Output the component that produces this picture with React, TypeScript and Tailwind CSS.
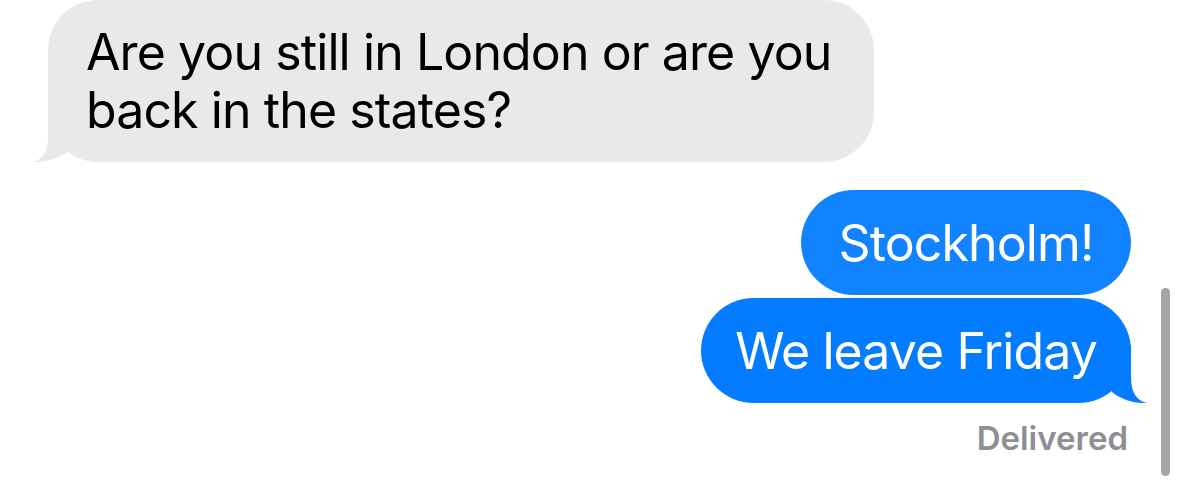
const font = { fontFamily: "Inter, 'Liberation Sans', sans-serif" };

function GrayTail() {
  return (
    <svg className="absolute left-[-16px] bottom-0" width="50" height="58" viewBox="0 0 50 58">
      <path d="M16 0 L16 34 C16 48 10 56 0 58 C10 58.5 24 56 36 48 L44 0 Z" fill="#e9e9eb" />
    </svg>
  );
}

function BlueTail() {
  return (
    <svg className="absolute right-[-16px] bottom-0" width="50" height="58" viewBox="0 0 50 58">
      <path d="M34 0 L34 32 C34 48 40 56 50 58 C40 58.5 26 56 15 47 L6 0 Z" fill="#047cff" />
    </svg>
  );
}

export default function App() {
  return (
    <div className="relative h-[489px] w-full overflow-hidden bg-white" style={font}>
      <div className="flex flex-col">
        <div className="relative ml-[48px] w-[826px] whitespace-nowrap rounded-[50px] bg-[#e9e9eb] pl-[38px] pt-[23px] pb-[23px] text-[50px] leading-[58px] text-black tracking-[-0.9px]">
          Are you still in London or are you
          <br />
          back in the states?
          <GrayTail />
        </div>

        <div className="mt-[28px] flex flex-col items-end gap-[3px] pr-[48px]">
          <div className="flex h-[105px] w-[330px] items-center justify-center whitespace-nowrap rounded-full bg-[#1283ff] text-[50px] leading-[58px] text-white tracking-[-0.9px]">
            Stockholm!
          </div>
          <div className="relative flex h-[105px] w-[430px] items-center justify-center whitespace-nowrap rounded-full bg-[#047cff] text-[50px] leading-[58px] text-white tracking-[-0.9px]">
            We leave Friday
            <BlueTail />
          </div>
          <div className="mt-[12px] pr-[3px] text-[33px] font-semibold leading-[40px] text-[#8e8e93]">
            Delivered
          </div>
        </div>
      </div>

      <div className="absolute left-[1161px] top-[288px] h-[188px] w-[9px] rounded-full bg-[#a6a6a6]" />
    </div>
  );
}
